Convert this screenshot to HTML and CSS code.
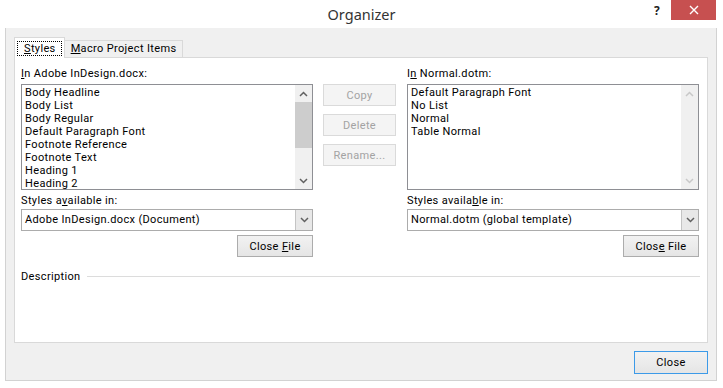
FILE: index.html
```html
<!DOCTYPE html>
<html lang="en">
<head>
    <meta charset="UTF-8">
    <title>Organizer</title>
    <link rel="stylesheet" href="styles.css">
</head>
<body>

    <div class="window">

        <!-- title bar -->
        <header class="titlebar">
            <div></div>
            <div class="title">Organizer</div>
            <div class="caption">
                <span class="help">?</span>
                <span class="closebox">
                    <svg width="10" height="10" viewBox="0 0 10 10"><path d="M1 1L9 9M9 1L1 9" stroke="#fff" stroke-width="1.4"/></svg>
                </span>
            </div>
        </header>

        <div class="client">

            <div class="tabs">
                <div class="tab active"><span class="focus"><u>S</u>tyles</span></div>
                <div class="tab"><u>M</u>acro Project Items</div>
            </div>

            <div class="panel">
                <div class="columns">

                    <!-- left side -->
                    <div class="col">
                        <div class="lbl"><u>I</u>n Adobe InDesign.docx:</div>
                        <div class="listbox">
                            <ul class="items">
                                <li>Body Headline</li>
                                <li>Body List</li>
                                <li>Body Regular</li>
                                <li>Default Paragraph Font</li>
                                <li>Footnote Reference</li>
                                <li>Footnote Text</li>
                                <li>Heading 1</li>
                                <li>Heading 2</li>
                            </ul>
                            <div class="vscroll">
                                <span class="arrow"><svg width="9" height="6" viewBox="0 0 9 6"><path d="M1 5L4.5 1.5L8 5" fill="none" stroke="#606060" stroke-width="1.5"/></svg></span>
                                <span class="track"><span class="thumb"></span></span>
                                <span class="arrow"><svg width="9" height="6" viewBox="0 0 9 6"><path d="M1 1L4.5 4.5L8 1" fill="none" stroke="#606060" stroke-width="1.5"/></svg></span>
                            </div>
                        </div>
                        <div class="lbl second">Styles a<u>v</u>ailable in:</div>
                        <div class="combo">
                            <span class="combo-text">Adobe InDesign.docx (Document)</span>
                            <span class="combo-btn"><svg width="9" height="6" viewBox="0 0 9 6"><path d="M1 1L4.5 4.5L8 1" fill="none" stroke="#606060" stroke-width="1.5"/></svg></span>
                        </div>
                        <div class="btn-row"><button class="btn">Close <u>F</u>ile</button></div>
                    </div>

                    <!-- copy / delete / rename -->
                    <div class="actions">
                        <button class="btn" disabled>Copy</button>
                        <button class="btn" disabled>Delete</button>
                        <button class="btn" disabled>Rename...</button>
                    </div>

                    <!-- right side -->
                    <div class="col">
                        <div class="lbl">I<u>n</u> Normal.dotm:</div>
                        <div class="listbox">
                            <ul class="items">
                                <li>Default Paragraph Font</li>
                                <li>No List</li>
                                <li>Normal</li>
                                <li>Table Normal</li>
                            </ul>
                            <div class="vscroll off">
                                <span class="arrow"><svg width="9" height="6" viewBox="0 0 9 6"><path d="M1 5L4.5 1.5L8 5" fill="none" stroke="#c8c8c8" stroke-width="1.5"/></svg></span>
                                <span class="track"></span>
                                <span class="arrow"><svg width="9" height="6" viewBox="0 0 9 6"><path d="M1 1L4.5 4.5L8 1" fill="none" stroke="#c8c8c8" stroke-width="1.5"/></svg></span>
                            </div>
                        </div>
                        <div class="lbl second">Styles availa<u>b</u>le in:</div>
                        <div class="combo">
                            <span class="combo-text">Normal.dotm (global template)</span>
                            <span class="combo-btn"><svg width="9" height="6" viewBox="0 0 9 6"><path d="M1 1L4.5 4.5L8 1" fill="none" stroke="#606060" stroke-width="1.5"/></svg></span>
                        </div>
                        <div class="btn-row"><button class="btn">Clos<u>e</u> File</button></div>
                    </div>

                </div>

                <div class="desc">
                    <span>Description</span>
                    <span class="rule"></span>
                </div>
            </div>

            <div class="footer">
                <button class="btn default">Close</button>
            </div>

        </div>
    </div>

</body>
</html>
```

FILE: styles.css
```css
* {
    margin: 0;
    padding: 0;
    box-sizing: border-box;
}

body {
    font-family: Roboto, "Noto Sans", sans-serif;
    font-size: 11px;
    letter-spacing: 0.35px;
    color: #000;
    background: #fff;
    width: 723px;
    height: 388px;
    overflow: hidden;
}

.window {
    width: 723px;
    height: 388px;
    display: flex;
    flex-direction: column;
    background: #fff;
}

/* title bar */
.titlebar {
    height: 28px;
    flex: none;
    display: grid;
    grid-template-columns: 1fr auto 1fr;
    align-items: start;
}

.title {
    font-family: "Noto Sans", sans-serif;
    font-size: 14.5px;
    letter-spacing: 0;
    color: #333;
    line-height: 28px;
}

.caption {
    display: flex;
    justify-content: flex-end;
    align-items: flex-start;
    padding-right: 7px;
}

.help {
    font-family: "Noto Sans", sans-serif;
    font-weight: bold;
    font-size: 12px;
    line-height: 21px;
    color: #222;
    margin-right: 11px;
}

.closebox {
    width: 45px;
    height: 20px;
    background: #c75050;
    display: flex;
    align-items: center;
    justify-content: center;
}

/* client area */
.client {
    flex: 1;
    margin: 0 6px 7px 5px;
    background: #f0f0f0;
    border: 1px solid #d2d2d2;
    border-top: none;
    padding: 9px 8px 0 8px;
    display: flex;
    flex-direction: column;
}

.tabs {
    height: 20px;
    display: flex;
    align-items: flex-end;
}

.tab {
    height: 17px;
    padding: 0 6px;
    border: 1px solid #d9d9d9;
    border-bottom: none;
    border-left: none;
    background: #f0f0f0;
    line-height: 16px;
}

.tab.active {
    height: 21px;
    margin-bottom: -1px;
    padding: 3px 2px 0 2px;
    border-left: 1px solid #d9d9d9;
    background: #fff;
    position: relative;
    z-index: 1;
}

.focus {
    display: block;
    height: 15px;
    padding: 0 5px 0 6px;
    line-height: 13px;
    border: 1px dotted #000;
}

.panel {
    height: 286px;
    flex: none;
    background: #fff;
    border: 1px solid #d9d9d9;
    padding: 8px 7px 0 6px;
}

.columns {
    display: flex;
}

.col {
    width: 292px;
    display: flex;
    flex-direction: column;
}

.lbl {
    line-height: 15px;
    height: 15px;
    margin-bottom: 3px;
}

.lbl.second {
    margin-top: 3px;
    margin-bottom: 1px;
}

.listbox {
    height: 106px;
    border: 1px solid #8e8f94;
    display: flex;
    background: #fff;
}

.items {
    flex: 1;
    list-style: none;
    padding: 1px 3px;
}

.items li {
    line-height: 13px;
    height: 13px;
    white-space: nowrap;
}

.vscroll {
    width: 17px;
    display: flex;
    flex-direction: column;
    background: #f0f0f0;
}

.arrow {
    height: 17px;
    display: flex;
    align-items: center;
    justify-content: center;
}

.track {
    flex: 1;
}

.thumb {
    display: block;
    height: 46px;
    background: #cdcdcd;
}

.combo {
    height: 22px;
    border: 1px solid #acacac;
    background: #fff;
    display: flex;
}

.combo-text {
    flex: 1;
    padding-left: 3px;
    line-height: 20px;
}

.combo-btn {
    width: 17px;
    border-left: 1px solid #c4c4c4;
    background: #e8e8e8;
    display: flex;
    align-items: center;
    justify-content: center;
}

.btn-row {
    margin-top: 4px;
    display: flex;
    justify-content: flex-end;
}

.btn {
    font: inherit;
    letter-spacing: inherit;
    color: #000;
    width: 76px;
    height: 22px;
    border: 1px solid #acacac;
    background: linear-gradient(#f2f2f2, #e5e5e5);
}

.btn:disabled {
    color: #a3a3a3;
    background: #f4f4f4;
    border-color: #dadada;
}

.actions {
    width: 73px;
    margin: 0 11px 0 10px;
    padding-top: 18px;
    display: flex;
    flex-direction: column;
    gap: 8px;
}

.actions .btn {
    width: 73px;
}

.desc {
    margin-top: 12px;
    height: 15px;
    line-height: 15px;
    display: flex;
    align-items: center;
}

.rule {
    flex: 1;
    height: 1px;
    margin-left: 6px;
    background: #dcdcdc;
}

.footer {
    margin-top: 8px;
    display: flex;
    justify-content: flex-end;
}

.btn.default {
    width: 74px;
    height: 23px;
    border-color: #3c9ae8;
}
```
